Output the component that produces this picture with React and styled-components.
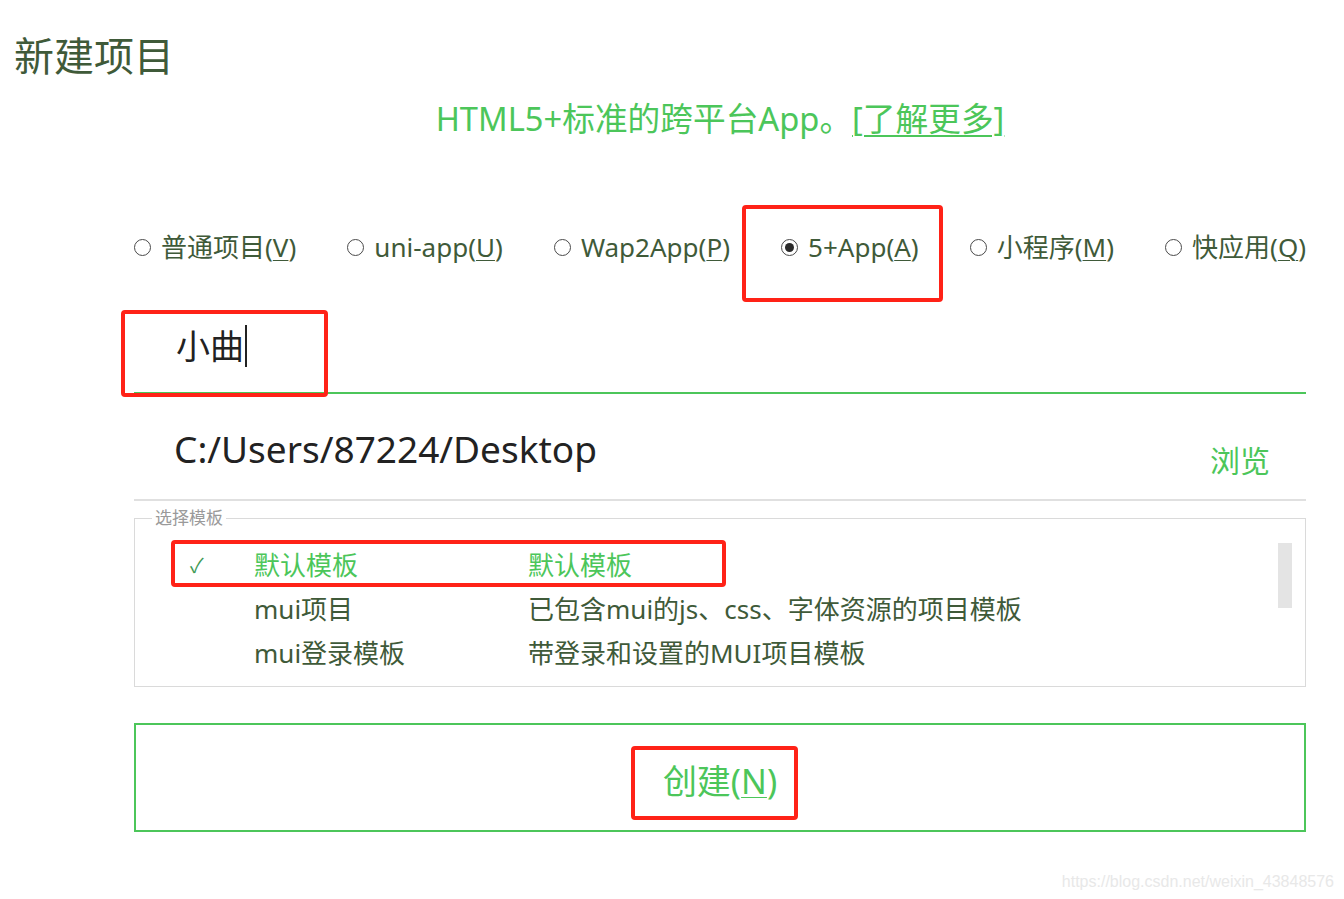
import React from 'react';
import styled, { createGlobalStyle } from 'styled-components';

const GlobalStyle = createGlobalStyle`
  html, body {
    margin: 0;
    padding: 0;
    background: #ffffff;
  }
  body {
    font-family: "Noto Sans", "Noto Sans CJK SC", sans-serif;
  }
`;

const GREEN = '#4cc65a';
const DARK = '#3f5a39';
const RED = '#ff2217';

const Page = styled.div`
  position: relative;
  width: 1344px;
  height: 899px;
  overflow: hidden;
  background: #fff;
`;

const Title = styled.h1`
  margin: 0;
  padding: 30px 0 0 14px;
  font-size: 40px;
  line-height: 52px;
  font-weight: 400;
  color: ${DARK};
`;

const Content = styled.div`
  margin: 0 38px 0 134px;
`;

const Subtitle = styled.p`
  margin: 12px 0 0;
  text-align: center;
  font-size: 32.7px;
  line-height: 50px;
  color: ${GREEN};
`;

const Link = styled.a`
  color: ${GREEN};
  text-decoration: underline;
  text-underline-offset: 4px;
  text-decoration-thickness: 2px;
`;

const RadioRow = styled.div`
  margin-top: 73px;
  height: 60px;
  display: flex;
  align-items: center;
  justify-content: space-between;
`;

const RadioItem = styled.label`
  display: flex;
  align-items: center;
  gap: 10px;
  font-size: 26px;
  line-height: 36px;
  color: ${DARK};
  cursor: pointer;
`;

const Circle = styled.span`
  width: 17px;
  height: 17px;
  border-radius: 50%;
  border: 1px solid #4a4a4a;
  box-sizing: border-box;
  display: flex;
  align-items: center;
  justify-content: center;
  &::after {
    content: '';
    width: 9px;
    height: 9px;
    border-radius: 50%;
    background: ${props => (props.$checked ? '#2a2a2a' : 'transparent')};
  }
`;

const Key = styled.span`
  text-decoration: underline;
  text-underline-offset: 3px;
  text-decoration-thickness: 1px;
`;

const NameRow = styled.div`
  margin-top: 23px;
  height: 92px;
  border-bottom: 2px solid ${GREEN};
  display: flex;
  align-items: center;
  padding-left: 42px;
  font-size: 34px;
  line-height: 44px;
  color: #222;
`;

const Caret = styled.span`
  display: inline-block;
  width: 0;
  height: 42px;
  border-left: 2px solid #222;
  margin-left: 1px;
`;

const PathRow = styled.div`
  height: 105px;
  border-bottom: 2px solid #e0e0e0;
  display: flex;
  align-items: center;
  justify-content: space-between;
  padding: 0 36px 0 40px;
`;

const PathText = styled.span`
  margin-top: 4px;
  font-size: 37px;
  line-height: 46px;
  color: #222;
`;

const Browse = styled.span`
  margin-top: 28px;
  font-size: 30px;
  line-height: 40px;
  color: ${GREEN};
  cursor: pointer;
`;

const TemplateBox = styled.fieldset`
  position: relative;
  margin: 7px 0 0;
  padding: 14px 0 12px;
  border: 1px solid #dadada;
  min-width: 0;
`;

const Legend = styled.legend`
  margin-left: 17px;
  padding: 0 3px;
  font-size: 17px;
  line-height: 20px;
  color: #9a9a9a;
`;

const TemplateRow = styled.div`
  display: grid;
  grid-template-columns: 64px 274px 1fr;
  align-items: center;
  height: 44px;
  padding-left: 55px;
  font-size: 26px;
  color: ${props => (props.$active ? GREEN : DARK)};
`;

const Check = styled.span`
  font-size: 20px;
  color: #3f9a55;
`;

const ScrollThumb = styled.div`
  position: absolute;
  right: 13px;
  top: 15px;
  width: 14px;
  height: 65px;
  background: #e4e4e4;
`;

const CreateButton = styled.button`
  display: flex;
  width: 100%;
  margin-top: 36px;
  height: 109px;
  align-items: center;
  justify-content: center;
  background: #fff;
  border: 2px solid ${GREEN};
  font-family: inherit;
  font-size: 34px;
  color: ${GREEN};
  padding: 0;
  cursor: pointer;
`;

const ButtonText = styled.span`
  margin-top: 4px;
`;

const Mark = styled.div`
  position: absolute;
  box-sizing: border-box;
  border: 4px solid ${RED};
  border-radius: 4px;
  pointer-events: none;
`;

const Watermark = styled.div`
  position: absolute;
  right: 10px;
  bottom: 8px;
  font-family: "Liberation Sans", Arial, sans-serif;
  font-size: 16px;
  color: #e8e8e8;
`;

const radios = [
  { label: '普通项目', key: 'V' },
  { label: 'uni-app', key: 'U' },
  { label: 'Wap2App', key: 'P' },
  { label: '5+App', key: 'A', checked: true },
  { label: '小程序', key: 'M' },
  { label: '快应用', key: 'Q' },
];

const templates = [
  { name: '默认模板', desc: '默认模板', active: true },
  { name: 'mui项目', desc: '已包含mui的js、css、字体资源的项目模板' },
  { name: 'mui登录模板', desc: '带登录和设置的MUI项目模板' },
];

const marks = [
  { left: 742, top: 205, width: 201, height: 97 },
  { left: 121, top: 310, width: 207, height: 87 },
  { left: 171, top: 540, width: 555, height: 47 },
  { left: 631, top: 746, width: 167, height: 74 },
];

export default function App() {
  return (
    <Page>
      <GlobalStyle />
      <Title>新建项目</Title>
      <Content>
        <Subtitle>
          HTML5+标准的跨平台App。<Link>[了解更多]</Link>
        </Subtitle>
        <RadioRow>
          {radios.map(r => (
            <RadioItem key={r.key}>
              <Circle $checked={r.checked} />
              <span>
                {r.label}(<Key>{r.key}</Key>)
              </span>
            </RadioItem>
          ))}
        </RadioRow>
        <NameRow>
          小曲<Caret />
        </NameRow>
        <PathRow>
          <PathText>C:/Users/87224/Desktop</PathText>
          <Browse>浏览</Browse>
        </PathRow>
        <TemplateBox>
          <Legend>选择模板</Legend>
          {templates.map(t => (
            <TemplateRow key={t.name} $active={t.active}>
              <Check>{t.active ? '✓' : ''}</Check>
              <span>{t.name}</span>
              <span>{t.desc}</span>
            </TemplateRow>
          ))}
          <ScrollThumb />
        </TemplateBox>
        <CreateButton>
          <ButtonText>
            创建(<Key>N</Key>)
          </ButtonText>
        </CreateButton>
      </Content>
      {marks.map((m, i) => (
        <Mark key={i} style={m} />
      ))}
      <Watermark>https://blog.csdn.net/weixin_43848576</Watermark>
    </Page>
  );
}
